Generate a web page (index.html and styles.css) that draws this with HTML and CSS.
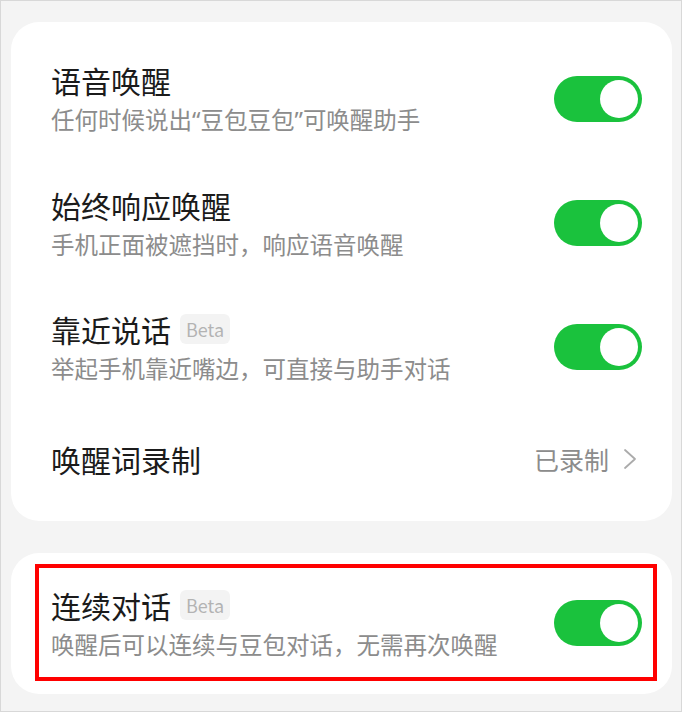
FILE: index.html
```html
<!DOCTYPE html>
<html lang="zh-CN">
<head>
    <meta charset="UTF-8">
    <meta name="viewport" content="width=device-width, initial-scale=1.0">
    <title>唤醒设置</title>
    <link rel="stylesheet" href="styles.css">
</head>
<body>
    <div class="page">
        <!-- Wake settings -->
        <section class="card card-main">
            <div class="row">
                <div class="row-text">
                    <div class="row-title">语音唤醒</div>
                    <div class="row-desc">任何时候说出<span class="quote">“</span>豆包豆包<span class="quote">”</span>可唤醒助手</div>
                </div>
                <span class="switch on"><span class="knob"></span></span>
            </div>

            <div class="row">
                <div class="row-text">
                    <div class="row-title">始终响应唤醒</div>
                    <div class="row-desc">手机正面被遮挡时，响应语音唤醒</div>
                </div>
                <span class="switch on"><span class="knob"></span></span>
            </div>

            <div class="row">
                <div class="row-text">
                    <div class="row-title">靠近说话 <span class="badge">Beta</span></div>
                    <div class="row-desc">举起手机靠近嘴边，可直接与助手对话</div>
                </div>
                <span class="switch on"><span class="knob"></span></span>
            </div>

            <div class="row row-link">
                <div class="row-title">唤醒词录制</div>
                <div class="row-value">
                    已录制
                    <svg width="14" height="22" viewBox="0 0 14 22" fill="none" stroke="currentColor" stroke-width="1.8" stroke-linecap="round" stroke-linejoin="round">
                        <path d="M2 2l10 9-10 9"></path>
                    </svg>
                </div>
            </div>
        </section>

        <!-- Continuous conversation -->
        <section class="card card-single">
            <div class="row">
                <div class="row-text">
                    <div class="row-title">连续对话 <span class="badge">Beta</span></div>
                    <div class="row-desc">唤醒后可以连续与豆包对话，无需再次唤醒</div>
                </div>
                <span class="switch on"><span class="knob"></span></span>
            </div>
            <div class="highlight"></div>
        </section>
    </div>
</body>
</html>
```

FILE: styles.css
```css
* {
    margin: 0;
    padding: 0;
    box-sizing: border-box;
    font-family: "Noto Sans CJK SC", "Noto Sans", sans-serif;
}

body {
    background-color: #f4f4f4;
}

.page {
    height: 712px;
    border: 1px solid #d8d8d8;
    padding: 21px 9px 0 10px;
    display: flex;
    flex-direction: column;
    gap: 32px;
}

.card {
    background-color: white;
    border-radius: 28px;
}

.card-main {
    padding: 14px 0 12px;
}

.card-single {
    position: relative;
    height: 141px;
    display: flex;
    align-items: center;
}

.card-single .row {
    flex: 1;
    padding-top: 0;
    padding-bottom: 2px;
}

.row {
    display: flex;
    align-items: center;
    justify-content: space-between;
    padding: 24px 30px 24px 40px;
}

.row-text {
    display: flex;
    flex-direction: column;
    gap: 2px;
}

.row-title {
    font-size: 30px;
    line-height: 40px;
    color: #1b1b1b;
    display: flex;
    align-items: center;
}

.row-desc {
    font-size: 23.5px;
    line-height: 34px;
    color: #8c8c8c;
}

.quote {
    font-family: "Noto Sans", sans-serif;
}

.badge {
    margin-left: 9px;
    padding: 0 6px;
    height: 30px;
    line-height: 30px;
    font-size: 18px;
    color: #b3b3b3;
    background-color: #f3f3f3;
    border-radius: 6px;
}

.row-link {
    height: 100px;
    padding-right: 35px;
}

.row-value {
    display: flex;
    align-items: center;
    gap: 14px;
    font-size: 25px;
    color: #8c8c8c;
}

.row-value svg {
    color: #ababab;
}

/* Toggle */
.switch {
    width: 88px;
    height: 46px;
    border-radius: 23px;
    background-color: #1ac23d;
    display: flex;
    align-items: center;
    padding: 4px;
    flex-shrink: 0;
}

.switch.on {
    justify-content: flex-end;
}

.knob {
    width: 38px;
    height: 38px;
    border-radius: 50%;
    background-color: white;
}

/* Red annotation frame */
.highlight {
    position: absolute;
    top: 11px;
    left: 24px;
    right: 15px;
    bottom: 13px;
    border: 4px solid #ff0000;
    pointer-events: none;
}
```
